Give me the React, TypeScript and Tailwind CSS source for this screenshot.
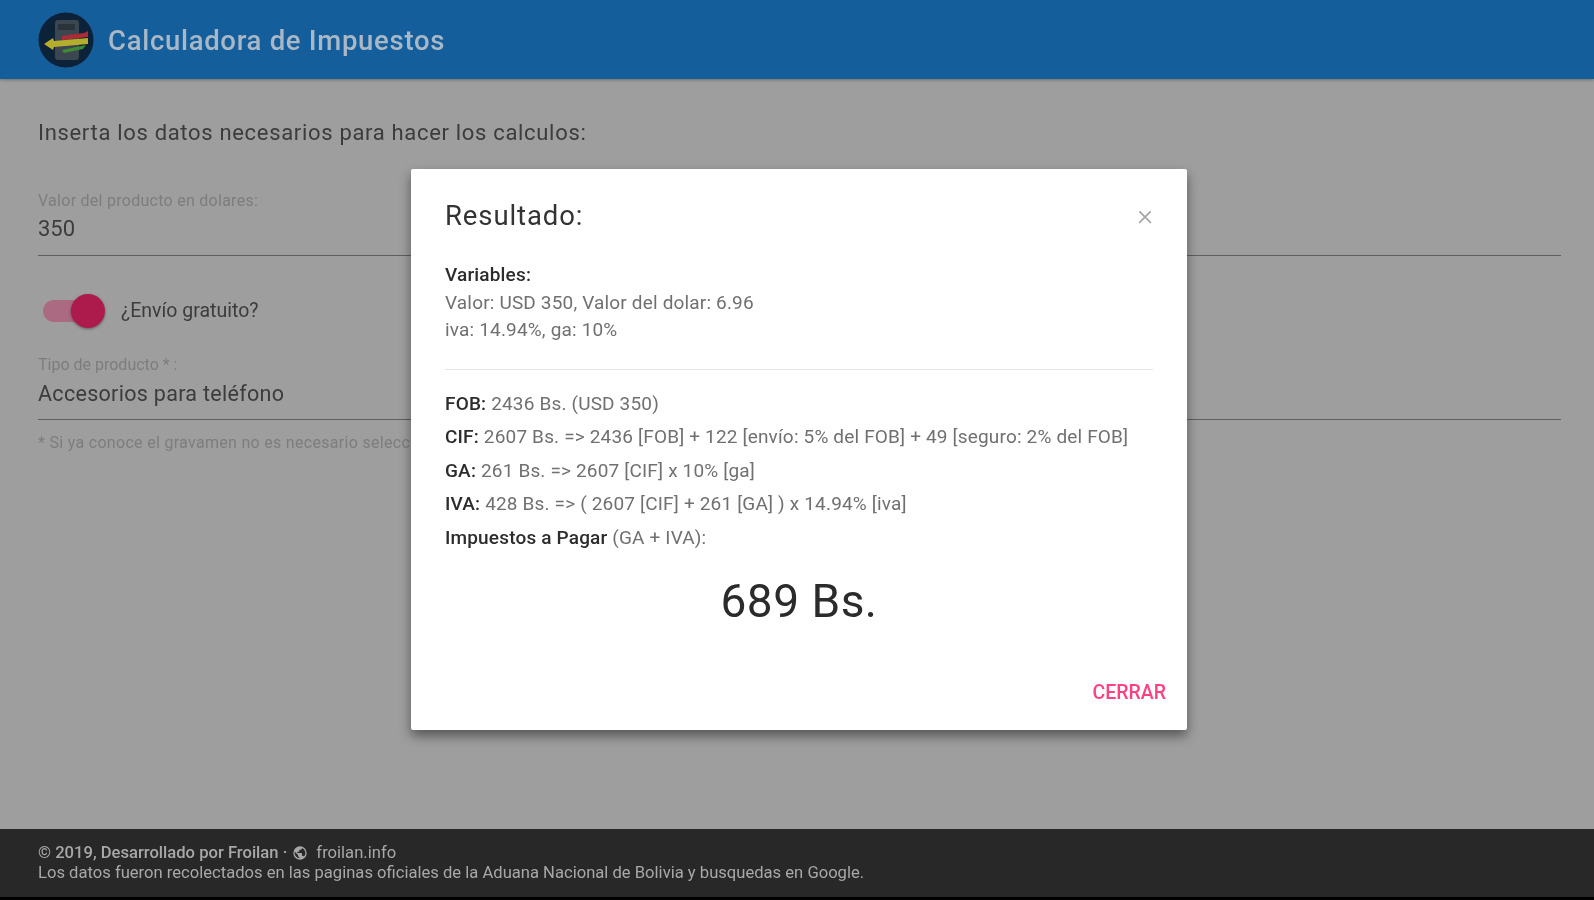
import React from "react";

const Logo = () => (
  <svg width="56" height="56" viewBox="0 0 56 56" className="shrink-0">
    <circle cx="28" cy="28" r="27.5" fill="#0c2238" />
    <rect x="17" y="8" width="24" height="40" rx="3" fill="#3c4650" />
    <rect x="20" y="12" width="17" height="6" fill="#2a323a" />
    <path d="M24 24 L46 21 L50 19 L50 25 L24 28 Z" fill="#b02a35" />
    <path d="M6 32 L15 26 L16 29 L50 26 L50 32 L16 35 L15 38 Z" fill="#b5ad2e" />
    <path d="M24 38 L48 33 L45 37 L26 41 Z" fill="#3f8a35" />
  </svg>
);

function Row({ b, t }: { b: string; t: string }) {
  return (
    <p className="h-[33.5px] leading-[33.5px] whitespace-nowrap">
      <span className="font-medium text-[#2c2c2c]">{b}</span> {t}
    </p>
  );
}

export default function App() {
  return (
    <div className="relative flex h-[900px] flex-col overflow-hidden bg-[#9e9e9e] font-['Roboto',sans-serif] blur-[0.6px]">
      <header className="flex h-[79px] items-center gap-[14px] bg-[#155e9c] pl-[38px] shadow-[0_1px_3px_rgba(0,0,0,0.3)]">
        <Logo />
        <h1 className="pt-[2px] text-[27.5px] font-medium tracking-[0.7px] text-[#a9b8c6]">Calculadora de Impuestos</h1>
      </header>

      <main className="flex flex-1 flex-col px-[38px] pr-[33px] pt-[42px] text-[#3c3c3c]">
        <p className="text-[22px] leading-[24px] tracking-[0.68px]">Inserta los datos necesarios para hacer los calculos:</p>

        <div className="mt-[47px] border-b-[1.5px] border-[#5f5f5f] pb-[14px]">
          <p className="text-[16px] leading-[18px] tracking-[0.27px] text-[#7d7d7d]">Valor del producto en dolares:</p>
          <p className="mt-[7px] text-[22px] leading-[24px]">350</p>
        </div>

        <div className="mt-[44px] flex items-center pl-[5px]">
          <div className="relative h-[22px] w-[56px] rounded-full bg-[#ac6a82]">
            <div className="absolute -top-[6px] right-[-6px] h-[34px] w-[34px] rounded-full bg-[#ad1b4d] shadow-[0_1px_3px_rgba(0,0,0,0.4)]" />
          </div>
          <span className="ml-[22px] text-[19.5px] leading-[22px]">¿Envío gratuito?</span>
        </div>

        <div className="mt-[34px] border-b-[1.5px] border-[#5f5f5f] pb-[13px]">
          <p className="text-[16px] leading-[18px] text-[#7d7d7d]">Tipo de producto * :</p>
          <p className="mt-[8px] text-[21.5px] leading-[24px] tracking-[0.3px]">Accesorios para teléfono</p>
        </div>

        <p className="mt-[14px] whitespace-nowrap text-[16px] leading-[18px] tracking-[0.3px] text-[#7d7d7d]">* Si ya conoce el gravamen no es necesario selecc</p>
      </main>

      <footer className="h-[71px] border-b-[3px] border-black bg-[#282828] pl-[38px] pt-[14px] text-[16.6px] leading-[20px] text-[#a8a8a8]">
        <p className="flex items-center">
          <span className="font-medium">© 2019, Desarrollado por Froilan ·</span>
          <svg width="16" height="16" viewBox="0 0 24 24" className="ml-[5px] mr-[8px]" fill="#a8a8a8">
            <path d="M12 2a10 10 0 1 0 0 20 10 10 0 0 0 0-20Zm-1 17.9A8 8 0 0 1 4.2 10L9 15v1a2 2 0 0 0 2 2Zm6.9-2.5A2 2 0 0 0 16 16h-1v-3a1 1 0 0 0-1-1H8v-2h2a1 1 0 0 0 1-1V7h2a2 2 0 0 0 2-2v-.4a8 8 0 0 1 2.9 12.8Z" />
          </svg>
          <span>froilan.info</span>
        </p>
        <p className="whitespace-nowrap">Los datos fueron recolectados en las paginas oficiales de la Aduana Nacional de Bolivia y busquedas en Google.</p>
      </footer>

      <div className="absolute left-[411px] top-[169px] flex h-[561px] w-[776px] flex-col rounded-[2px] bg-white px-[34px] shadow-[0_6px_12px_rgba(0,0,0,0.45)]">
        <div className="flex items-start justify-between pt-[31px]">
          <h2 className="text-[27.5px] leading-[32px] tracking-[0.9px] text-[#333]">Resultado:</h2>
          <span className="-mt-[1px] text-[30px] font-light leading-[32px] text-[#a6a6a6]">×</span>
        </div>
        <div className="mt-[29px] text-[19px] leading-[27.5px] tracking-[0.17px] text-[#707070]">
          <p className="font-medium text-[#2c2c2c]">Variables:</p>
          <p>Valor: USD 350, Valor del dolar: 6.96</p>
          <p>iva: 14.94%, ga: 10%</p>
        </div>
        <div className="mt-[25px] h-px bg-[#e6e6e6]" />
        <div className="mt-[17px] text-[19px] tracking-[0.17px] text-[#707070]">
          <Row b="FOB:" t="2436 Bs. (USD 350)" />
          <Row b="CIF:" t="2607 Bs. => 2436 [FOB] + 122 [envío: 5% del FOB] + 49 [seguro: 2% del FOB]" />
          <Row b="GA:" t="261 Bs. => 2607 [CIF] x 10% [ga]" />
          <Row b="IVA:" t="428 Bs. => ( 2607 [CIF] + 261 [GA] ) x 14.94% [iva]" />
          <Row b="Impuestos a Pagar" t="(GA + IVA):" />
        </div>
        <p className="mt-[20px] text-center text-[46px] leading-[54px] tracking-[0.5px] text-[#2b2b2b]">689 Bs.</p>
        <div className="-mr-[13px] mt-[54px] text-right">
          <span className="text-[19.5px] font-medium leading-[22px] text-[#ff4081]">CERRAR</span>
        </div>
      </div>
    </div>
  );
}
